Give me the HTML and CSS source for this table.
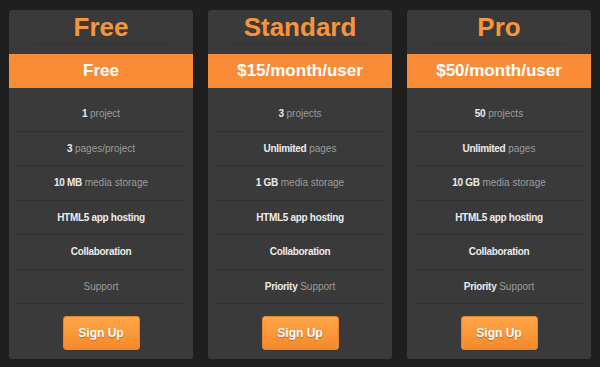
FILE: index.html
```html
<!DOCTYPE html>
<html lang="en">
<head>
    <meta charset="UTF-8">
    <title>Pricing</title>
    <link rel="stylesheet" href="styles.css">
</head>
<body>
    <div class="plans">
        <div class="plan">
            <div class="plan-head"><h2>Free</h2></div>
            <div class="price">Free</div>
            <ul class="features">
                <li><b>1</b> project</li>
                <li><b>3</b> pages/project</li>
                <li><b>10 MB</b> media storage</li>
                <li><b>HTML5 app hosting</b></li>
                <li><b>Collaboration</b></li>
                <li>Support</li>
            </ul>
            <div class="plan-foot"><a href="#" class="btn">Sign Up</a></div>
        </div>

        <div class="plan">
            <div class="plan-head"><h2>Standard</h2></div>
            <div class="price">$15/month/user</div>
            <ul class="features">
                <li><b>3</b> projects</li>
                <li><b>Unlimited</b> pages</li>
                <li><b>1 GB</b> media storage</li>
                <li><b>HTML5 app hosting</b></li>
                <li><b>Collaboration</b></li>
                <li><b>Priority</b> Support</li>
            </ul>
            <div class="plan-foot"><a href="#" class="btn">Sign Up</a></div>
        </div>

        <div class="plan">
            <div class="plan-head"><h2>Pro</h2></div>
            <div class="price">$50/month/user</div>
            <ul class="features">
                <li><b>50</b> projects</li>
                <li><b>Unlimited</b> pages</li>
                <li><b>10 GB</b> media storage</li>
                <li><b>HTML5 app hosting</b></li>
                <li><b>Collaboration</b></li>
                <li><b>Priority</b> Support</li>
            </ul>
            <div class="plan-foot"><a href="#" class="btn">Sign Up</a></div>
        </div>
    </div>
</body>
</html>
```

FILE: styles.css
```css
* {
    margin: 0;
    padding: 0;
    box-sizing: border-box;
}

body {
    font-family: "Liberation Sans", Arial, sans-serif;
    background: #1f1f1f;
    padding: 10px 9px;
}

.plans {
    display: flex;
    gap: 15px;
}

.plan {
    width: 184px;
    background: #3a3a3a;
    border-radius: 3px;
    overflow: hidden;
}

.plan-head {
    padding: 0 24px 9px;
}

.plan-head h2 {
    color: #f7953f;
    font-size: 26px;
    font-weight: bold;
    line-height: 30px;
    padding: 2px 0 2px;
    text-align: center;
    border-bottom: 1px solid #333;
}

.price {
    height: 34px;
    line-height: 34px;
    background: #fb8c37;
    color: #fff;
    font-size: 17px;
    font-weight: bold;
    text-align: center;
}

.features {
    list-style: none;
    padding-top: 9px;
}

.features li {
    height: 34.5px;
    line-height: 33.5px;
    margin: 0 6px;
    border-bottom: 1px solid #323232;
    color: #9c9c9c;
    font-size: 10px;
    text-align: center;
}

.features b {
    color: #ececec;
    letter-spacing: -0.3px;
}

.plan-foot {
    padding: 12px 0 9px;
    text-align: center;
}

.btn {
    display: inline-block;
    width: 77px;
    height: 34px;
    line-height: 32px;
    border: 1px solid #e9842a;
    border-radius: 3px;
    background: linear-gradient(#ffa548, #f48a2b);
    color: #fff;
    font-size: 12px;
    font-weight: bold;
    text-decoration: none;
    text-shadow: 0 1px 1px rgba(0,0,0,0.3);
}
```
